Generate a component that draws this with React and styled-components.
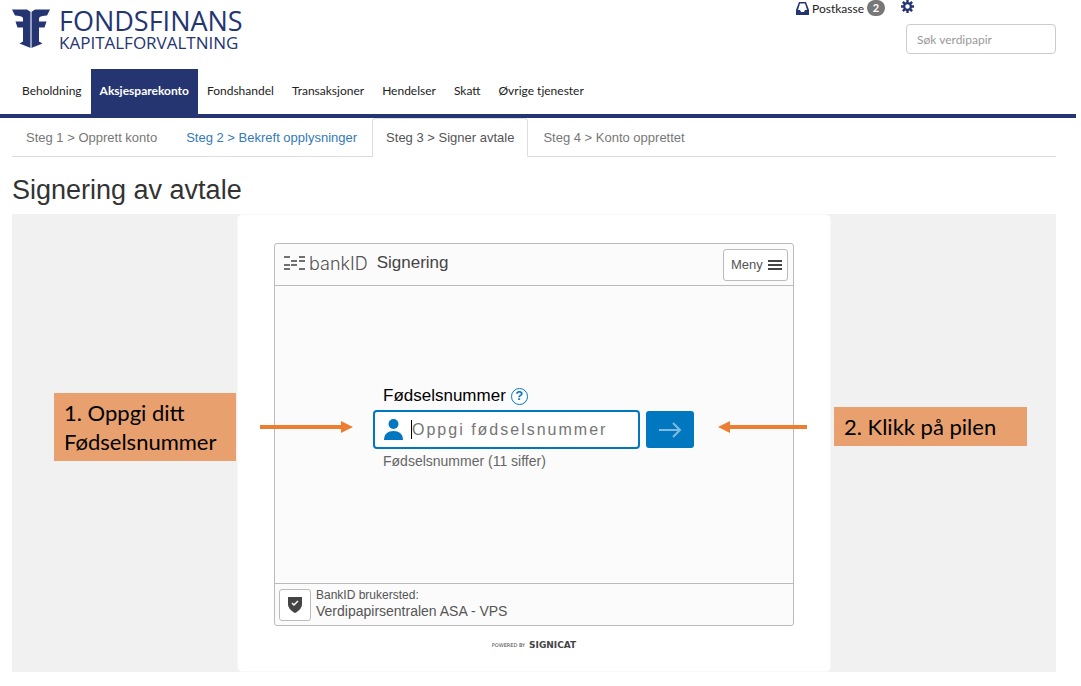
import React from "react";
import styled, { createGlobalStyle, css } from "styled-components";

const navy = "#243571";
const blue = "#0077bf";
const humanist = 'Lato, "Open Sans", sans-serif';
const grotesque = '"Liberation Sans", Arial, sans-serif';

const GlobalStyle = createGlobalStyle`
  *, *::before, *::after { box-sizing: border-box; }
  body { margin: 0; background: #fff; color: #333; font-family: ${grotesque}; }
  button, input { font-family: inherit; }
  h1, p { margin: 0; font-weight: 400; }
`;

const Page = styled.div`
  margin-right: 5px;
`;

const Header = styled.header`
  display: flex;
  justify-content: space-between;
  align-items: flex-start;
  height: 69px;
  padding: 0 20px 0 12px;
`;

const Brand = styled.a`
  display: flex;
  align-items: flex-start;
  gap: 9px;
  padding-top: 9px;
  color: ${navy};
  text-decoration: none;
  font-family: "Open Sans", sans-serif;

  svg { display: block; }
`;

const BrandText = styled.span`
  display: flex;
  flex-direction: column;
`;

const BrandName = styled.span`
  font-size: 27px;
  line-height: 24px;
`;

const BrandUnit = styled.span`
  font-size: 17px;
  line-height: 20px;
`;

const Tools = styled.div`
  display: flex;
  flex-direction: column;
  align-items: flex-end;
  gap: 8px;
  font-family: ${humanist};
`;

const ToolLinks = styled.div`
  display: flex;
  justify-content: space-between;
  align-items: flex-start;
  width: 260px;
  height: 16px;
`;

const MailLink = styled.a`
  display: flex;
  align-items: center;
  gap: 3px;
  height: 16px;
  color: #222;
  font-size: 12px;
  text-decoration: none;
`;

const Count = styled.span`
  width: 18px;
  height: 16px;
  border-radius: 8px;
  background: #777;
  color: #fff;
  font-size: 11px;
  font-weight: 700;
  line-height: 16px;
  text-align: center;
`;

const IconButton = styled.button`
  display: flex;
  width: 14px;
  margin-right: 141px;
  padding: 0;
  border: 0;
  background: none;
  color: ${navy};
`;

const Search = styled.input`
  width: 150px;
  height: 30px;
  padding: 0 10px;
  border: 1px solid #ccc;
  border-radius: 4px;
  font-size: 12px;

  &::placeholder { color: #999; opacity: 1; }
`;

const Nav = styled.nav`
  display: flex;
  height: 49px;
  padding-left: 13px;
  border-bottom: 4px solid ${navy};
  font-family: ${humanist};
  font-size: 12px;
`;

const NavLink = styled.a`
  display: flex;
  align-items: center;
  padding: 0 9px 2px;
  color: #222;
  text-decoration: none;

  ${(p) => p.$active && css`
    background: ${navy};
    color: #fff;
    font-weight: 700;
  `}
`;

const Content = styled.main`
  padding: 0 20px 0 12px;
`;

const Steps = styled.nav`
  display: flex;
  height: 39px;
  border-bottom: 1px solid #ddd;
`;

const Step = styled.a`
  display: flex;
  align-items: center;
  height: 39px;
  margin-right: 1px;
  padding: 0 13px;
  border: 1px solid ${(p) => (p.$active ? "#ddd" : "transparent")};
  border-bottom-color: ${(p) => (p.$active ? "#fff" : "transparent")};
  border-radius: 4px 4px 0 0;
  color: ${(p) => (p.$done ? "#337ab7" : p.$active ? "#555" : "#777")};
  font-size: 13px;
  text-decoration: none;
`;

const Title = styled.h1`
  padding: 16px 0 7px;
  font-size: 27px;
  line-height: 34px;
`;

const Stage = styled.section`
  display: flex;
  justify-content: center;
  background: #f1f1f1;
`;

const Sheet = styled.div`
  position: relative;
  display: flex;
  flex-direction: column;
  align-items: center;
  width: 594px;
  padding: 28px 36px 17px;
  border: 1px solid #f8f8f8;
  border-radius: 5px;
  background: #fff;
`;

const Dialog = styled.form`
  display: flex;
  flex-direction: column;
  width: 520px;
  border: 1px solid #bbb;
  border-radius: 3px;
  background: #fbfbfb;
`;

const DialogHead = styled.div`
  display: flex;
  align-items: center;
  justify-content: space-between;
  height: 42px;
  padding: 0 5px 0 9px;
  border-bottom: 1px solid #bbb;
`;

const DialogTitle = styled.div`
  display: flex;
  align-items: center;
  height: 38px;
  align-self: flex-start;
  color: #444;
  font-size: 17px;
`;

const BankIdName = styled.span`
  margin: 0 9px 0 4px;
  color: #555;
  font-family: Inter, sans-serif;
  font-size: 18px;
  font-weight: 300;
`;

const MenuButton = styled.button`
  display: flex;
  align-items: center;
  justify-content: space-between;
  width: 65px;
  height: 32px;
  padding: 0 5px 0 7px;
  border: 1px solid #bbb;
  border-radius: 3px;
  background: #fff;
  color: #555;
  font-size: 13px;
`;

const DialogBody = styled.div`
  display: flex;
  flex-direction: column;
  height: 297px;
  padding: 99px 98px 0;
`;

const LabelRow = styled.div`
  display: flex;
  align-items: center;
  gap: 5px;
  height: 22px;
  padding-left: 10px;
  color: #000;
  font-size: 17px;
`;

const HelpButton = styled.button`
  width: 17px;
  height: 17px;
  padding: 0;
  border: 1px solid ${blue};
  border-radius: 50%;
  background: #fff;
  color: ${blue};
  font-size: 13px;
  font-weight: 700;
  line-height: 14px;
`;

const EntryRow = styled.div`
  display: flex;
  align-items: center;
  gap: 6px;
  margin-top: 3px;
`;

const Entry = styled.div`
  display: flex;
  align-items: center;
  width: 267px;
  height: 39px;
  padding-left: 9px;
  border: 2px solid ${blue};
  border-radius: 4px;
  background: #fff;
`;

const Caret = styled.span`
  width: 1px;
  height: 19px;
  margin-left: 8px;
  background: #000;
`;

const EntryInput = styled.input`
  flex: 1;
  min-width: 0;
  height: 30px;
  padding: 0;
  border: 0;
  outline: 0;
  background: none;
  font-size: 16px;
  letter-spacing: 2px;

  &::placeholder { color: #757575; opacity: 1; }
`;

const SubmitButton = styled.button`
  display: flex;
  align-items: center;
  justify-content: center;
  width: 48px;
  height: 37px;
  padding: 0;
  border: 0;
  border-radius: 3px;
  background: ${blue};
`;

const Hint = styled.p`
  padding: 4px 0 0 10px;
  color: #666;
  font-size: 14px;
  line-height: 17px;
`;

const DialogFoot = styled.div`
  display: flex;
  align-items: center;
  gap: 5px;
  height: 42px;
  padding: 0 4px;
  border-top: 1px solid #bbb;
  color: #555;
`;

const ShieldButton = styled.button`
  display: flex;
  align-items: center;
  justify-content: center;
  width: 32px;
  height: 32px;
  padding: 0;
  border: 1px solid #bbb;
  border-radius: 3px;
  background: #fff;
`;

const Site = styled.div`
  padding-bottom: 3px;
  font-size: 14px;
  line-height: 16px;
`;

const SiteCaption = styled.div`
  font-size: 12px;
`;

const Powered = styled.div`
  display: flex;
  align-items: center;
  gap: 4px;
  height: 10px;
  margin-top: 14px;
  margin-bottom: 4px;
  color: #444;
  font-family: "DejaVu Sans", sans-serif;
  font-size: 5px;

  strong { font-size: 9px; }
`;

const Callout = styled.div`
  position: absolute;
  padding: 5px 10px;
  background: #e8a06f;
  color: #000;
  font-family: ${humanist};
  font-size: 22px;
  line-height: 29px;
`;

const CalloutNumber = styled(Callout)`
  top: 178px;
  right: 594px;
  width: 182px;
`;

const CalloutArrow = styled(Callout)`
  top: 192px;
  left: 596px;
  width: 193px;
`;

const Arrow = styled.svg`
  position: absolute;
  top: 206px;
  ${(p) => (p.$side === "left" ? "left: 22px;" : "right: 23px;")}
`;

const navItems = ["Beholdning", "Aksjesparekonto", "Fondshandel", "Transaksjoner", "Hendelser", "Skatt", "Øvrige tjenester"];

const steps = [
  { label: "Steg 1 > Opprett konto" },
  { label: "Steg 2 > Bekreft opplysninger", done: true },
  { label: "Steg 3 > Signer avtale", active: true },
  { label: "Steg 4 > Konto opprettet" },
];

const halfMark =
  "M0 .5H15L18.7 3V39L7.5 34.5L11 32.5V18.5H5.5L3.5 12.5H11V9C10 7 7 7 3 6.5Z";

const BrandMark = () => (
  <svg width="38" height="40" viewBox="0 0 38 40" fill={navy} aria-hidden="true">
    <path d={halfMark} />
    <path d={halfMark} transform="matrix(-1 0 0 1 38 0)" />
    <path d="M19 3V39" stroke="#c8cde0" strokeWidth="1" />
  </svg>
);

const BankIdMark = () => (
  <svg width="21" height="14" viewBox="0 0 21 14" stroke="#444" strokeWidth="1.5" aria-hidden="true">
    <path d="M0 1H6M0 9H6M0 13H6M7 5H13M7 9H13M15 1H21M15 5H21M15 13H21" />
  </svg>
);

export default function App() {
  return (
    <>
      <GlobalStyle />
      <Page>
        <Header>
          <Brand href="#">
            <BrandMark />
            <BrandText>
              <BrandName>FONDSFINANS</BrandName>
              <BrandUnit>KAPITALFORVALTNING</BrandUnit>
            </BrandText>
          </Brand>
          <Tools>
            <ToolLinks>
              <MailLink href="#">
                <svg width="13" height="13" viewBox="0 0 13 13" aria-hidden="true">
                  <path d="M3 0H10L13 8V13H0V8ZM4 1.5L2 8H4L5 10H8L9 8H11L9 1.5Z" fill={navy} fillRule="evenodd" />
                </svg>
                Postkasse
                <Count>2</Count>
              </MailLink>
              <IconButton type="button" aria-label="Innstillinger">
                <svg width="13" height="13" viewBox="0 0 14 14" aria-hidden="true">
                  <path d="M7 0V14M0 7H14M2 2L12 12M12 2L2 12" stroke={navy} strokeWidth="2.6" />
                  <circle cx="7" cy="7" r="3.6" fill="#fff" stroke={navy} strokeWidth="2.4" />
                </svg>
              </IconButton>
            </ToolLinks>
            <Search type="search" placeholder="Søk verdipapir" aria-label="Søk verdipapir" />
          </Tools>
        </Header>

        <Nav aria-label="Hovedmeny">
          {navItems.map((item) => (
            <NavLink key={item} href="#" $active={item === "Aksjesparekonto"}>{item}</NavLink>
          ))}
        </Nav>

        <Content>
          <Steps aria-label="Steg">
            {steps.map((s) => (
              <Step key={s.label} href="#" $active={s.active} $done={s.done}>{s.label}</Step>
            ))}
          </Steps>
          <Title>Signering av avtale</Title>

          <Stage>
            <Sheet>
              <Dialog onSubmit={(e) => e.preventDefault()}>
                <DialogHead>
                  <DialogTitle>
                    <BankIdMark />
                    <BankIdName>bankID</BankIdName>
                    Signering
                  </DialogTitle>
                  <MenuButton type="button">
                    Meny
                    <svg width="14" height="10" viewBox="0 0 14 10" stroke="#444" strokeWidth="2" aria-hidden="true">
                      <path d="M0 1H14M0 5H14M0 9H14" />
                    </svg>
                  </MenuButton>
                </DialogHead>
                <DialogBody>
                  <LabelRow>
                    <label htmlFor="fnr">Fødselsnummer</label>
                    <HelpButton type="button">?</HelpButton>
                  </LabelRow>
                  <EntryRow>
                    <Entry>
                      <svg width="19" height="21" viewBox="0 0 19 21" fill={blue} aria-hidden="true">
                        <circle cx="9.5" cy="5" r="5" />
                        <path d="M0 21C0 15 4 12 9.5 12S19 15 19 21Z" />
                      </svg>
                      <Caret />
                      <EntryInput id="fnr" placeholder="Oppgi fødselsnummer" />
                    </Entry>
                    <SubmitButton type="submit" aria-label="Neste">
                      <svg width="23" height="16" viewBox="0 0 23 16" fill="none" stroke="#80bbdf" strokeWidth="2" aria-hidden="true">
                        <path d="M0 8H21M14 1L21 8L14 15" />
                      </svg>
                    </SubmitButton>
                  </EntryRow>
                  <Hint>Fødselsnummer (11 siffer)</Hint>
                </DialogBody>
                <DialogFoot>
                  <ShieldButton type="button" aria-label="Sikkerhet">
                    <svg width="14" height="17" viewBox="0 0 14 17" aria-hidden="true">
                      <path d="M0 1H14V8C14 12 11 15 7 17C3 15 0 12 0 8Z" fill="#444" />
                      <path d="M4 7L6 9L10 5" fill="none" stroke="#fff" strokeWidth="1.5" />
                    </svg>
                  </ShieldButton>
                  <Site>
                    <SiteCaption>BankID brukersted:</SiteCaption>
                    Verdipapirsentralen ASA - VPS
                  </Site>
                </DialogFoot>
              </Dialog>
              <Powered>POWERED BY <strong>SIGNICAT</strong></Powered>

              <CalloutNumber>1. Oppgi ditt Fødselsnummer</CalloutNumber>
              <Arrow $side="left" width="93" height="12" viewBox="0 0 93 12" fill="#ed7d31" aria-hidden="true">
                <path d="M0 4H81V0L93 6L81 12V8H0Z" />
              </Arrow>
              <Arrow $side="right" width="89" height="12" viewBox="0 0 89 12" fill="#ed7d31" aria-hidden="true">
                <path d="M89 4H12V0L0 6L12 12V8H89Z" />
              </Arrow>
              <CalloutArrow>2. Klikk på pilen</CalloutArrow>
            </Sheet>
          </Stage>
        </Content>
      </Page>
    </>
  );
}
